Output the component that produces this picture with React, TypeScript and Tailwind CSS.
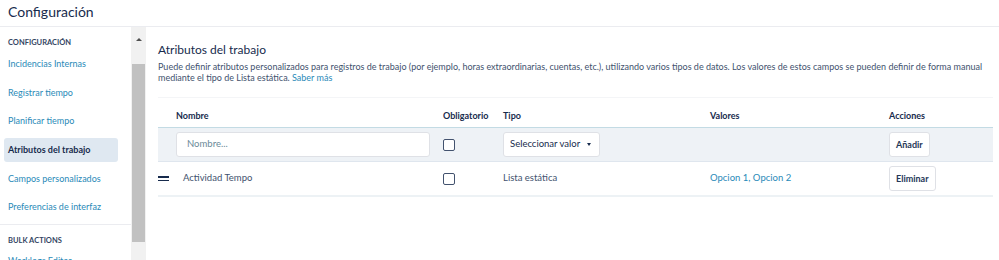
const NAV = [
  'Incidencias Internas',
  'Registrar tiempo',
  'Planificar tiempo',
  'Atributos del trabajo',
  'Campos personalizados',
  'Preferencias de interfaz',
]

function Checkbox() {
  return <div className="h-[12px] w-[12px] rounded-[2px] border border-[#42526e] bg-white" />
}

function Boton({ children }: { children: string }) {
  return (
    <button className="h-[25px] rounded-[3px] border border-[#dfe1e6] bg-white px-[6px] text-[9px] font-bold text-[#253858]">
      {children}
    </button>
  )
}

export default function App() {
  return (
    <div className="flex h-[260px] w-[999px] flex-col overflow-hidden bg-white font-['Lato',sans-serif] text-[#172b4d]">
      {/* Título */}
      <div className="h-[27px] shrink-0 border-b border-[#ebecf0] pl-[8px] pt-[3px]">
        <h1 className="text-[14px] leading-[18px] text-[#172b4d]">Configuración</h1>
      </div>

      <div className="flex min-h-0 flex-1">
        {/* Barra lateral */}
        <aside className="w-[131px] shrink-0">
          <div className="px-[8px] pt-[10px] text-[7.5px] font-bold leading-[12px] text-[#344563]">
            CONFIGURACIÓN
          </div>
          <nav className="flex flex-col gap-[4.6px] px-[4px] pt-[3px]">
            {NAV.map((n) => (
              <div
                key={n}
                className={
                  n === 'Atributos del trabajo'
                    ? 'flex h-[24px] w-[114px] items-center rounded-[3px] bg-[#dfe8f1] px-[4px] text-[9px] font-bold text-[#172b4d]'
                    : 'flex h-[24px] items-center px-[4px] text-[9px] text-[#2a8ab8]'
                }
              >
                {n}
              </div>
            ))}
          </nav>
          <div className="mt-[5px] border-t border-[#ebecf0] px-[8px] pt-[10px] text-[7.5px] font-bold leading-[12px] text-[#344563]">
            BULK ACTIONS
          </div>
          <div className="px-[8px] pt-[7px] text-[9px] text-[#2a8ab8]">Worklogs Editor</div>
        </aside>

        {/* Barra de desplazamiento */}
        <div className="flex w-[15px] shrink-0 flex-col bg-[#f1f1f1]">
          <div className="flex h-[15px] items-end justify-center pb-[1px]">
            <div className="h-0 w-0 border-x-[3px] border-b-[3px] border-x-transparent border-b-[#505050]" />
          </div>
          <div className="mx-[1px] mt-[22px] h-[178px] bg-[#c1c1c1]" />
        </div>

        {/* Contenido */}
        <main className="flex-1 pl-[12px] pr-[6px] pt-[15px]">
          <h2 className="text-[12px] leading-[16px] text-[#172b4d]">Atributos del trabajo</h2>
          <p className="mt-[3px] text-[9px] leading-[11px] text-[#42526e]">
            Puede definir atributos personalizados para registros de trabajo (por ejemplo, horas extraordinarias, cuentas,
            etc.), utilizando varios tipos de datos. Los valores de estos campos se pueden definir de forma manual mediante
            el tipo de Lista estática. <span className="text-[#2a8ab8]">Saber más</span>
          </p>

          <div className="mt-[14px] border-t border-[#f4f5f7]">
            {/* Cabecera */}
            <div className="flex h-[30px] items-end border-b border-[#c3dbe4] pb-[5px] text-[9px] font-bold text-[#172b4d]">
              <div className="w-[18px]" />
              <div className="w-[267px]">Nombre</div>
              <div className="w-[60px]">Obligatorio</div>
              <div className="w-[207px]">Tipo</div>
              <div className="w-[179px]">Valores</div>
              <div>Acciones</div>
            </div>

            {/* Fila de alta */}
            <div className="flex h-[34px] items-center border-b border-[#dfe6ee] bg-[#eef2f6] text-[9.5px]">
              <div className="w-[18px]" />
              <div className="w-[267px]">
                <div className="flex h-[25px] w-[254px] items-center rounded-[3px] border border-[#dfe1e6] bg-white px-[10px] text-[#6b8a99]">
                  Nombre...
                </div>
              </div>
              <div className="w-[60px]">
                <Checkbox />
              </div>
              <div className="w-[207px]">
                <div className="flex h-[25px] w-[97px] items-center gap-[7px] whitespace-nowrap rounded-[3px] border border-[#dfe1e6] bg-white px-[6px] text-[#172b4d]">
                  Seleccionar valor
                  <div className="h-0 w-0 border-x-[2.5px] border-t-[3px] border-x-transparent border-t-[#172b4d]" />
                </div>
              </div>
              <div className="w-[179px]" />
              <Boton>Añadir</Boton>
            </div>

            {/* Fila de datos */}
            <div className="flex h-[35px] items-center border-b-[2px] border-[#edf2f5] text-[9.5px] text-[#42526e]">
              <div className="flex w-[25px] flex-col gap-[2px]">
                <div className="h-[1.5px] w-[11px] bg-[#172b4d]" />
                <div className="h-[1.5px] w-[11px] bg-[#172b4d]" />
              </div>
              <div className="w-[260px]">Actividad Tempo</div>
              <div className="w-[60px]">
                <Checkbox />
              </div>
              <div className="w-[207px]">Lista estática</div>
              <div className="w-[179px] text-[#2a8ab8]">Opcion 1, Opcion 2</div>
              <Boton>Eliminar</Boton>
            </div>
          </div>
        </main>
      </div>
    </div>
  )
}
